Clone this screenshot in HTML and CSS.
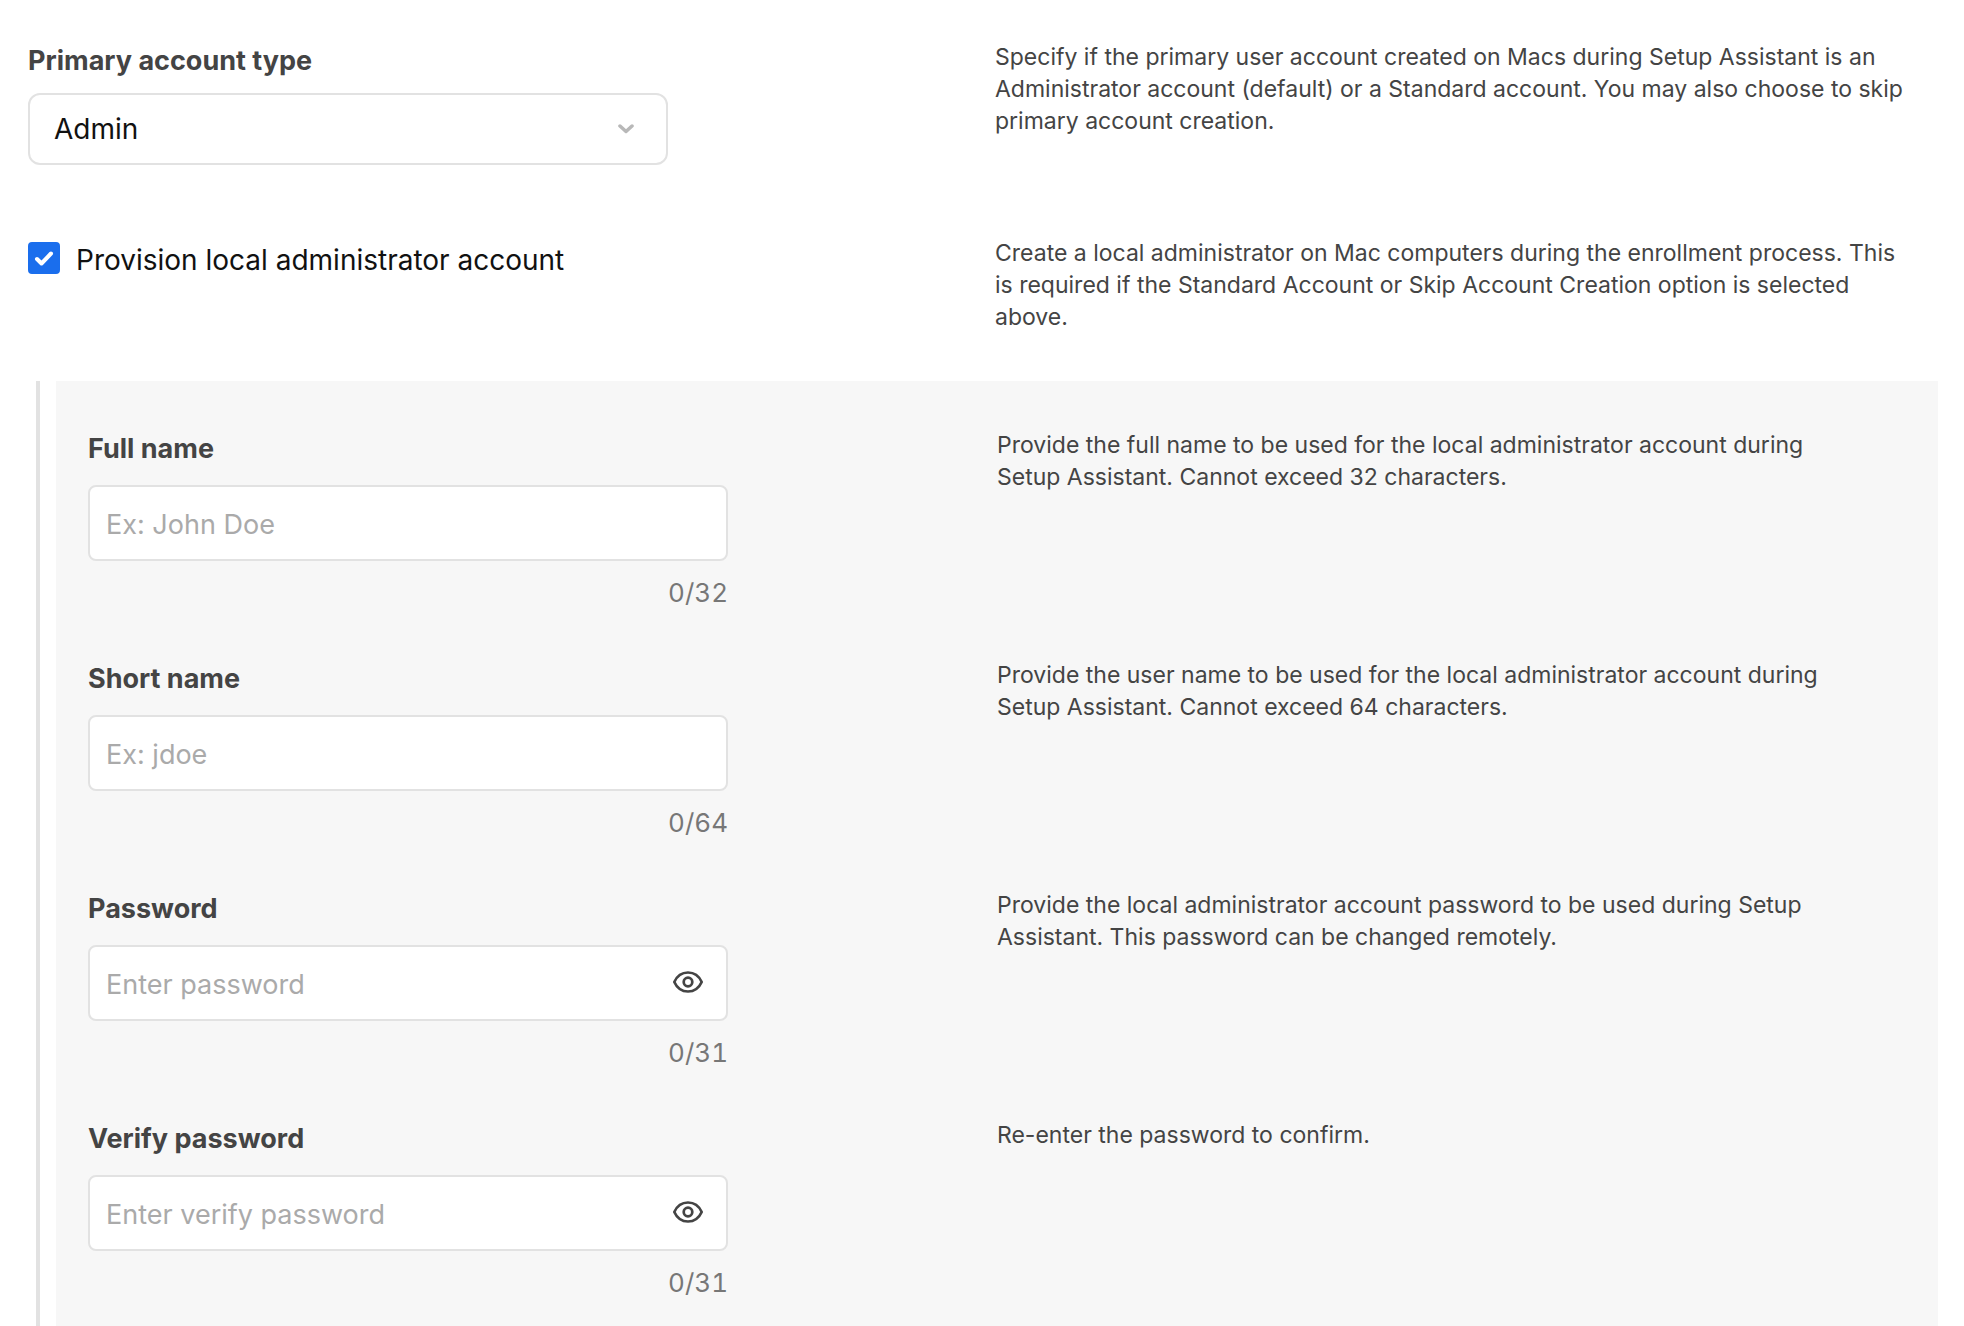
FILE: index.html
```html
<!DOCTYPE html>
<html lang="en">
<head>
    <meta charset="UTF-8">
    <meta name="viewport" content="width=device-width, initial-scale=1.0">
    <title>Account Settings</title>
    <link rel="stylesheet" href="styles.css">
</head>
<body>
    <form class="settings">
        <div class="row">
            <div class="field">
                <label class="field-label" for="account-type">Primary account type</label>
                <div class="control">
                    <select class="select" id="account-type" name="account-type">
                        <option selected>Admin</option>
                        <option>Standard</option>
                        <option>Skip</option>
                    </select>
                    <svg class="chevron" width="16" height="10" viewBox="0 0 16 10" aria-hidden="true">
                        <path d="M2 2l6 5.500 6-5.500" fill="none" stroke="#b8b8b8" stroke-width="3.500" stroke-linecap="round" stroke-linejoin="round"/>
                    </svg>
                </div>
            </div>
            <p class="help">Specify if the primary user account created on Macs during Setup Assistant is an Administrator account (default) or a Standard account. You may also choose to skip primary account creation.</p>
        </div>

        <div class="row">
            <div class="check">
                <span class="check-box">
                    <input type="checkbox" id="provision" name="provision" checked>
                    <svg class="check-mark" width="32" height="32" viewBox="0 0 32 32" aria-hidden="true">
                        <path d="M9 17l4.500 4.500L23 11.500" fill="none" stroke="#fff" stroke-width="4" stroke-linecap="round" stroke-linejoin="round"/>
                    </svg>
                </span>
                <label class="check-label" for="provision">Provision local administrator account</label>
            </div>
            <p class="help">Create a local administrator on Mac computers during the enrollment process. This is required if the Standard Account or Skip Account Creation option is selected above.</p>
        </div>

        <div class="nested">
            <div class="panel">
                <div class="row">
                    <div class="field">
                        <label class="field-label" for="full-name">Full name</label>
                        <input class="input" type="text" id="full-name" placeholder="Ex: John Doe" maxlength="32">
                        <span class="counter">0/32</span>
                    </div>
                    <p class="help">Provide the full name to be used for the local administrator account during Setup Assistant. Cannot exceed 32 characters.</p>
                </div>
                <div class="row">
                    <div class="field">
                        <label class="field-label" for="short-name">Short name</label>
                        <input class="input" type="text" id="short-name" placeholder="Ex: jdoe" maxlength="64">
                        <span class="counter">0/64</span>
                    </div>
                    <p class="help">Provide the user name to be used for the local administrator account during Setup Assistant. Cannot exceed 64 characters.</p>
                </div>
                <div class="row">
                    <div class="field">
                        <label class="field-label" for="password">Password</label>
                        <div class="control">
                            <input class="input" type="password" id="password" placeholder="Enter password" maxlength="31">
                            <button class="reveal" type="button" aria-label="Show password">
                                <svg width="32" height="24" viewBox="0 0 32 24" fill="none" stroke="#444" stroke-width="2.700">
                                    <path d="M2.300 12C5 6 10 2.500 16 2.500S27 6 29.700 12C27 18 22 21.500 16 21.500S5 18 2.300 12z" stroke-linejoin="round"/>
                                    <circle cx="16" cy="12" r="4.300"/>
                                </svg>
                            </button>
                        </div>
                        <span class="counter">0/31</span>
                    </div>
                    <p class="help">Provide the local administrator account password to be used during Setup Assistant. This password can be changed remotely.</p>
                </div>
                <div class="row">
                    <div class="field">
                        <label class="field-label" for="verify-password">Verify password</label>
                        <div class="control">
                            <input class="input" type="password" id="verify-password" placeholder="Enter verify password" maxlength="31">
                            <button class="reveal" type="button" aria-label="Show verify password">
                                <svg width="32" height="24" viewBox="0 0 32 24" fill="none" stroke="#444" stroke-width="2.700">
                                    <path d="M2.300 12C5 6 10 2.500 16 2.500S27 6 29.700 12C27 18 22 21.500 16 21.500S5 18 2.300 12z" stroke-linejoin="round"/>
                                    <circle cx="16" cy="12" r="4.300"/>
                                </svg>
                            </button>
                        </div>
                        <span class="counter">0/31</span>
                    </div>
                    <p class="help">Re-enter the password to confirm.</p>
                </div>
            </div>
        </div>
    </form>
</body>
</html>
```
FILE: styles.css
```css
* {
    box-sizing: border-box;
}
body {
    margin: 0;
    background: #fff;
    color: #111;
    font-family: Inter, "Liberation Sans", sans-serif;
}
.settings {
    display: flex;
    flex-direction: column;
    min-height: 100vh;
    padding: 41px 26px 0 28px;
}
.row {
    display: grid;
    grid-template-columns: 1fr 1fr;
    column-gap: 24px;
    min-height: 196px;
}
.field {
    display: flex;
    flex-direction: column;
    max-width: 640px;
}
.field-label {
    margin-bottom: 12px;
    color: #444;
    font-size: 27px;
    font-weight: 700;
    line-height: 40px;
}
.control {
    position: relative;
}
.select {
    display: block;
    width: 100%;
    height: 72px;
    padding: 0 24px;
    border: 2px solid #e2e2e2;
    border-radius: 12px;
    background: #fff;
    color: #111;
    font: 28px Inter, "Liberation Sans", sans-serif;
    appearance: none;
}
.chevron {
    position: absolute;
    top: 31px;
    right: 34px;
    pointer-events: none;
}
.help {
    max-width: 916px;
    margin: 0;
    color: #444;
    font-size: 23px;
    line-height: 32px;
}
.check {
    display: flex;
    align-items: flex-start;
    gap: 16px;
    padding-top: 5px;
}
.check-box {
    position: relative;
    width: 32px;
    height: 32px;
}
.check-box input {
    display: block;
    width: 32px;
    height: 32px;
    margin: 0;
    border-radius: 4px;
    background: #fff;
    border: 2px solid #b8b8b8;
    appearance: none;
}
.check-box input:checked {
    border-color: #1a6eed;
    background: #1a6eed;
}
.check-mark {
    position: absolute;
    top: 0;
    left: 0;
    pointer-events: none;
}
.check-label {
    font-size: 28px;
    line-height: 36px;
}

/* fields for the local admin account */
.nested {
    display: flex;
    flex: 1;
    margin: -52px 0 0 8px;
    padding-left: 16px;
    border-left: 4px solid #e2e2e2;
}
.panel {
    flex: 1;
    padding: 48px 56px 0 32px;
    background: #f7f7f7;
}
.panel .row {
    min-height: 230px;
}
.panel .row:last-child {
    min-height: 0;
}
.panel .field-label {
    margin-bottom: 16px;
}
.panel .help {
    max-width: 850px;
}
.input {
    display: block;
    width: 100%;
    height: 76px;
    padding: 2px 16px 0;
    border: 2px solid #e2e2e2;
    border-radius: 8px;
    background: #fff;
    color: #111;
    font: 27px Inter, "Liberation Sans", sans-serif;
}
.input::placeholder {
    color: #aaa;
}
.reveal {
    display: flex;
    position: absolute;
    top: 25px;
    right: 24px;
    padding: 0;
    border: none;
    background: none;
    cursor: pointer;
}
.counter {
    margin-top: 16px;
    color: #777;
    font-size: 26px;
    font-variant-numeric: tabular-nums;
    line-height: 32px;
    text-align: right;
}
```
